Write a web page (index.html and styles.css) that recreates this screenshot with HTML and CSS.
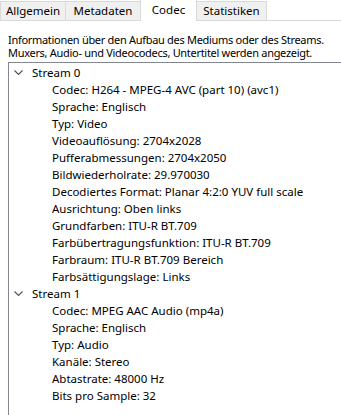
FILE: index.html
```html
<!DOCTYPE html>
<html lang="de">
<head>
<meta charset="utf-8">
<link rel="stylesheet" href="styles.css">
</head>
<body>
<div class="tabs">
  <div class="tab t1">Allgemein</div>
  <div class="tab t2">Metadaten</div>
  <div class="tab active t3">Codec</div>
  <div class="tab t4">Statistiken</div>
</div>
<div class="panel">
  <p class="desc">Informationen über den Aufbau des Mediums oder des Streams.<br>Muxers, Audio- und Videocodecs, Untertitel werden angezeigt.</p>
  <div class="tree">
    <div class="node"><svg class="chev" width="9" height="6" viewBox="0 0 9 6"><path d="M0.5 0.5 L4.5 4.5 L8.5 0.5" fill="none" stroke="#555" stroke-width="1.2"/></svg>Stream 0</div>
    <div class="leaf">Codec: H264 - MPEG-4 AVC (part 10) (avc1)</div>
    <div class="leaf">Sprache: Englisch</div>
    <div class="leaf">Typ: Video</div>
    <div class="leaf">Videoauflösung: 2704x2028</div>
    <div class="leaf">Pufferabmessungen: 2704x2050</div>
    <div class="leaf">Bildwiederholrate: 29.970030</div>
    <div class="leaf">Decodiertes Format: Planar 4:2:0 YUV full scale</div>
    <div class="leaf">Ausrichtung: Oben links</div>
    <div class="leaf">Grundfarben: ITU-R BT.709</div>
    <div class="leaf">Farbübertragungsfunktion: ITU-R BT.709</div>
    <div class="leaf">Farbraum: ITU-R BT.709 Bereich</div>
    <div class="leaf">Farbsättigungslage: Links</div>
    <div class="node"><svg class="chev" width="9" height="6" viewBox="0 0 9 6"><path d="M0.5 0.5 L4.5 4.5 L8.5 0.5" fill="none" stroke="#555" stroke-width="1.2"/></svg>Stream 1</div>
    <div class="leaf">Codec: MPEG AAC Audio (mp4a)</div>
    <div class="leaf">Sprache: Englisch</div>
    <div class="leaf">Typ: Audio</div>
    <div class="leaf">Kanäle: Stereo</div>
    <div class="leaf">Abtastrate: 48000 Hz</div>
    <div class="leaf">Bits pro Sample: 32</div>
  </div>
</div>
</body>
</html>
```
FILE: styles.css
```css
html, body {
  margin: 0;
  padding: 0;
  background: #ffffff;
  overflow: hidden;
}
body {
  font-family: "Noto Sans", "Open Sans", sans-serif;
  font-size: 11.5px;
  color: #000;
  width: 341px;
  height: 415px;
}
.tabs {
  display: flex;
  align-items: flex-end;
  height: 21px;
  background: #ffffff;
  border-bottom: 1px solid #d9d9d9;
  box-sizing: border-box;
}
.tab {
  height: 19px;
  box-sizing: border-box;
  background: #f0f0f0;
  border: 1px solid #d9d9d9;
  border-bottom: none;
  display: flex;
  align-items: center;
  justify-content: center;
  line-height: 16px;
  margin-right: -1px;
}
.t1 { width: 66px; }
.t2 { width: 76px; }
.t3 { width: 57px; }
.t4 { width: 71px; }
.tab.active {
  height: 22px;
  background: #ffffff;
  margin-bottom: -1px;
  position: relative;
  z-index: 1;
  padding-bottom: 2px;
}
.panel {
  padding: 12px 0 0 8px;
}
.desc {
  margin: 0 0 3px 0;
  line-height: 13px;
  white-space: nowrap;
  font-size: 11px;
  letter-spacing: -0.3px;
}
.tree {
  border: 1px solid #828790;
  border-right: none;
  border-bottom: none;
  height: 360px;
  padding-top: 1px;
  overflow: hidden;
}
.node, .leaf {
  height: 17px;
  line-height: 17px;
  white-space: nowrap;
}
.node {
  display: flex;
  align-items: center;
  padding-left: 5px;
}
.chev {
  margin-right: 9px;
}
.leaf {
  padding-left: 43px;
}
```
